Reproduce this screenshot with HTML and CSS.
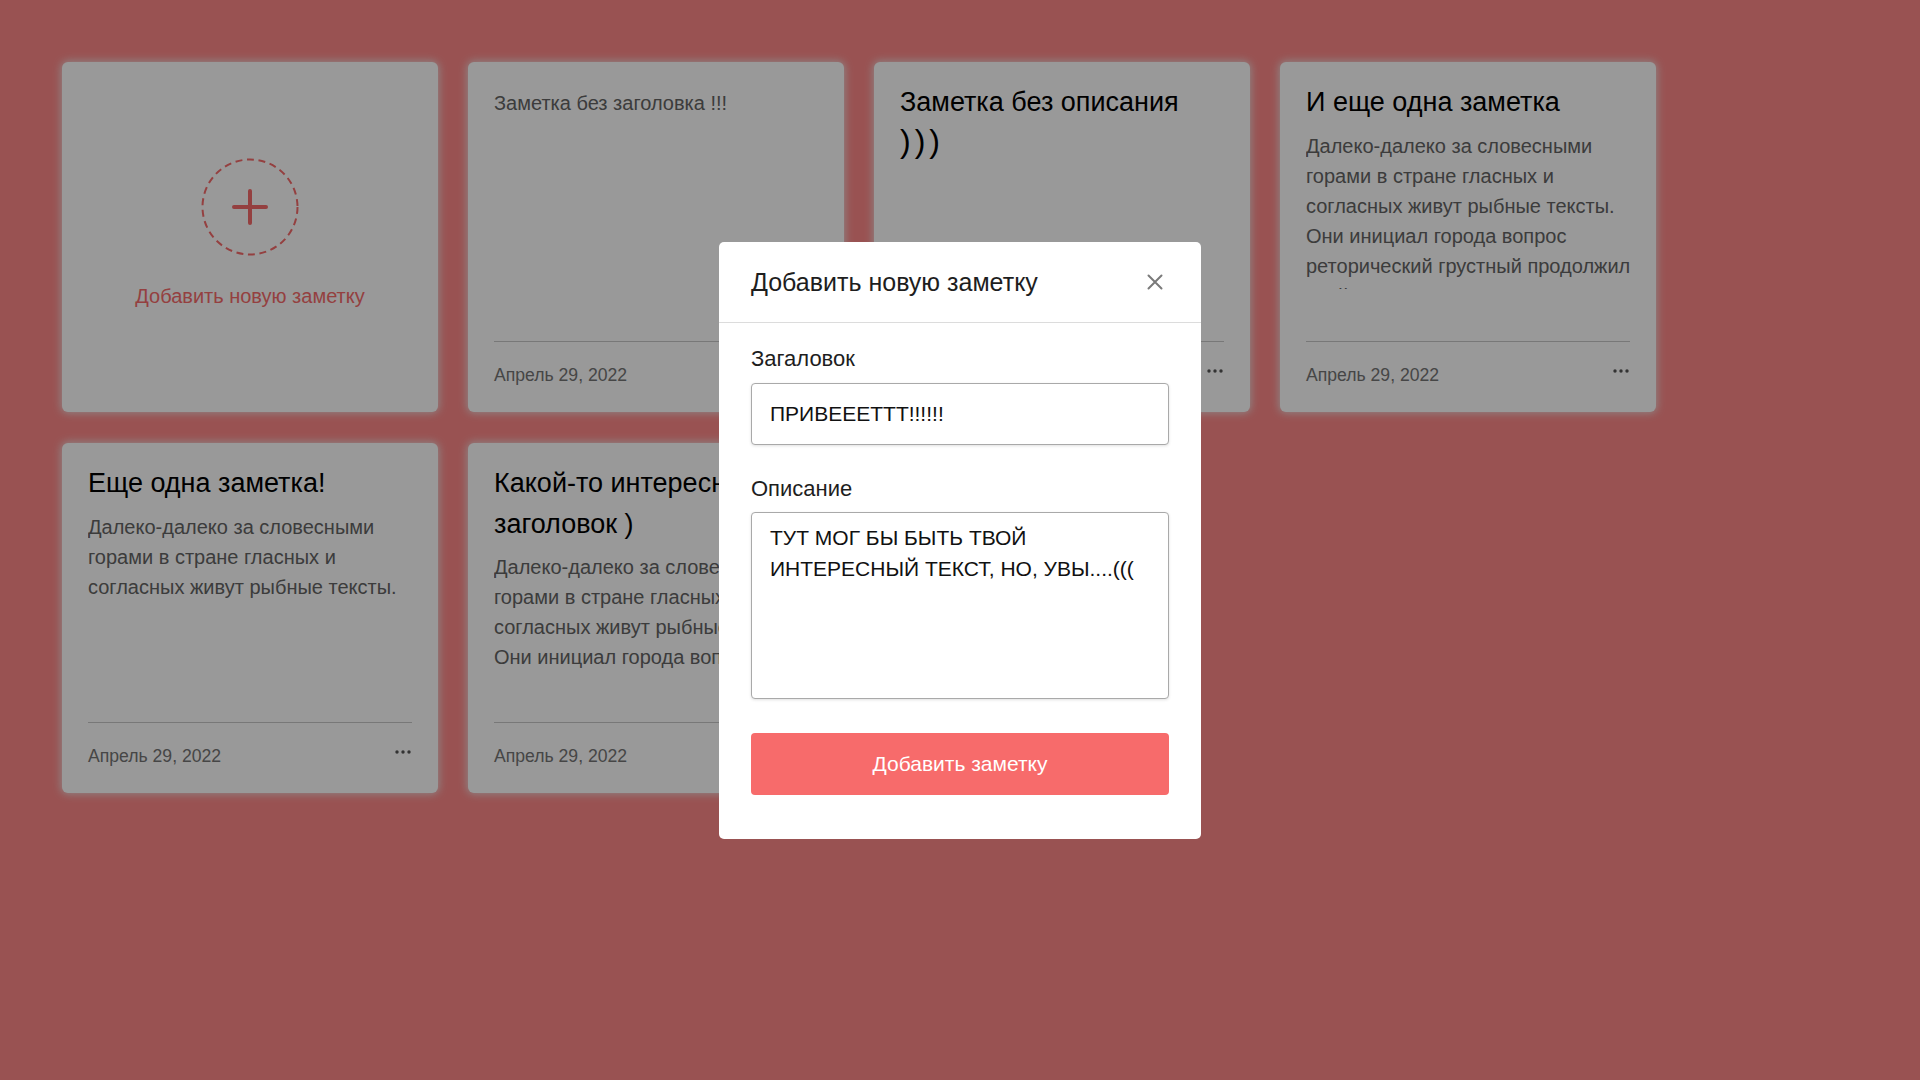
FILE: index.html
```html
<!DOCTYPE html>
<html lang="ru">
<head>
<meta charset="utf-8">
<title>Заметки</title>
<link rel="stylesheet" href="styles.css">
</head>
<body>
<main class="notes">
  <div class="card card-add">
    <svg class="add-icon" width="98" height="98" viewBox="0 0 98 98">
      <circle cx="49" cy="49" r="47.5" fill="none" stroke="#f76b6b" stroke-width="2" stroke-dasharray="7 4.6"/>
      <path d="M49 33v32M33 49h32" stroke="#f76b6b" stroke-width="4" stroke-linecap="round"/>
    </svg>
    <div class="add-label">Добавить новую заметку</div>
  </div>

  <div class="card">
    <div class="card-body">
      <p class="card-desc only">Заметка без заголовка !!!</p>
    </div>
    <div class="card-footer">
      <span class="date">Апрель 29, 2022</span>
      <svg class="dots" width="16" height="4" viewBox="0 0 16 4"><circle cx="2" cy="2" r="1.7"/><circle cx="8" cy="2" r="1.7"/><circle cx="14" cy="2" r="1.7"/></svg>
    </div>
  </div>

  <div class="card">
    <div class="card-body">
      <h2 class="card-title">Заметка без описания <span class="smile">)))</span></h2>
    </div>
    <div class="card-footer">
      <span class="date">Апрель 29, 2022</span>
      <svg class="dots" width="16" height="4" viewBox="0 0 16 4"><circle cx="2" cy="2" r="1.7"/><circle cx="8" cy="2" r="1.7"/><circle cx="14" cy="2" r="1.7"/></svg>
    </div>
  </div>

  <div class="card">
    <div class="card-body">
      <h2 class="card-title">И еще одна заметка</h2>
      <p class="card-desc">Далеко-далеко за словесными горами в стране гласных и согласных живут рыбные тексты. Они инициал города вопрос реторический грустный продолжил свой путь, рот на вопрос.</p>
    </div>
    <div class="card-footer">
      <span class="date">Апрель 29, 2022</span>
      <svg class="dots" width="16" height="4" viewBox="0 0 16 4"><circle cx="2" cy="2" r="1.7"/><circle cx="8" cy="2" r="1.7"/><circle cx="14" cy="2" r="1.7"/></svg>
    </div>
  </div>

  <div class="card">
    <div class="card-body">
      <h2 class="card-title">Еще одна заметка!</h2>
      <p class="card-desc">Далеко-далеко за словесными горами в стране гласных и согласных живут рыбные тексты.</p>
    </div>
    <div class="card-footer">
      <span class="date">Апрель 29, 2022</span>
      <svg class="dots" width="16" height="4" viewBox="0 0 16 4"><circle cx="2" cy="2" r="1.7"/><circle cx="8" cy="2" r="1.7"/><circle cx="14" cy="2" r="1.7"/></svg>
    </div>
  </div>

  <div class="card">
    <div class="card-body">
      <h2 class="card-title">Какой-то интересный заголовок )</h2>
      <p class="card-desc">Далеко-далеко за словесными горами в стране гласных и согласных живут рыбные тексты. Они инициал города вопрос реторический грустный продолжил свой путь.</p>
    </div>
    <div class="card-footer">
      <span class="date">Апрель 29, 2022</span>
      <svg class="dots" width="16" height="4" viewBox="0 0 16 4"><circle cx="2" cy="2" r="1.7"/><circle cx="8" cy="2" r="1.7"/><circle cx="14" cy="2" r="1.7"/></svg>
    </div>
  </div>
</main>

<div class="overlay">
  <div class="modal">
    <div class="modal-header">
      <h3 class="modal-title">Добавить новую заметку</h3>
      <button class="close" type="button" aria-label="Закрыть">
        <svg width="16" height="16" viewBox="0 0 16 16"><path d="M1.5 1.5l13 13M14.5 1.5l-13 13" stroke="#7a7a7a" stroke-width="2" stroke-linecap="round"/></svg>
      </button>
    </div>
    <form class="modal-body">
      <label class="field-label" for="title">Загаловок</label>
      <input class="field-input" id="title" type="text" value="ПРИВЕЕЕТТТ!!!!!!">
      <label class="field-label second" for="desc">Описание</label>
      <textarea class="field-area" id="desc">ТУТ МОГ БЫ БЫТЬ ТВОЙ ИНТЕРЕСНЫЙ ТЕКСТ, НО, УВЫ....(((</textarea>
      <button class="submit" type="button">Добавить заметку</button>
    </form>
  </div>
</div>
</body>
</html>
```

FILE: styles.css
```css
* { box-sizing: border-box; }

html, body {
  margin: 0;
  height: 100%;
}

body {
  background: #ff8989;
  font-family: "Liberation Sans", Arial, sans-serif;
  color: #222;
}

.notes {
  display: grid;
  grid-template-columns: repeat(4, 376px);
  grid-auto-rows: 350px;
  gap: 31px 30px;
  padding: 62px;
}

.card {
  background: #fff;
  border-radius: 6px;
  box-shadow: 0 0 9px 1px rgba(235, 235, 235, 0.9);
  padding: 20px 26px 26px;
  display: flex;
  flex-direction: column;
  height: 350px;
}

.card-add {
  align-items: center;
  justify-content: center;
  padding: 0 0 6px;
}

.add-icon { display: block; }

.add-label {
  margin-top: 25px;
  font-size: 20px;
  line-height: 30px;
  color: #f76b6b;
}

.card-body {
  flex: 1;
  min-height: 0;
  overflow: hidden;
  margin-bottom: 52px;
}

.card-title {
  margin: 0 0 8px;
  font-size: 27px;
  line-height: 1.5;
  font-weight: 400;
  color: #000;
}

.smile {
  font-size: 32px;
  letter-spacing: 4px;
  line-height: 1;
}

.card-desc {
  margin: 0 -6px 0 0;
  font-size: 20px;
  line-height: 30px;
  color: #646464;
}

.card-desc.only { margin-top: 6px; }

.card-footer {
  border-top: 1px solid #c8c8c8;
  padding-top: 23px;
  display: flex;
  justify-content: space-between;
  align-items: flex-start;
}

.date {
  font-size: 17.6px;
  color: #757575;
}

.dots {
  display: block;
  margin-top: 4px;
  margin-right: 1px;
  fill: #555;
}

.overlay {
  position: fixed;
  inset: 0;
  background: rgba(0, 0, 0, 0.4);
  display: flex;
  align-items: center;
  justify-content: center;
}

.modal {
  width: 482px;
  background: #fff;
  border-radius: 5px;
}

.modal-header {
  display: flex;
  align-items: center;
  justify-content: space-between;
  padding: 26px 38px 26px 32px;
  border-bottom: 1px solid #dcdcdc;
}

.modal-title {
  margin: 0;
  font-size: 25px;
  font-weight: 400;
  line-height: 28px;
  color: #1e1e1e;
}

.close {
  border: 0;
  background: none;
  padding: 0;
  width: 16px;
  height: 16px;
  display: flex;
}

.modal-body {
  padding: 23px 32px 44px;
  display: flex;
  flex-direction: column;
}

.field-label {
  font-size: 22px;
  line-height: 25px;
  color: #1e1e1e;
}

.field-label.second { margin-top: 31px; }

.field-input,
.field-area {
  margin-top: 12px;
  width: 100%;
  border: 1px solid #a9a9a9;
  border-radius: 4px;
  font-family: "Liberation Sans", Arial, sans-serif;
  font-size: 21px;
  color: #111;
  background: #fff;
  box-shadow: 0 1px 3px rgba(0, 0, 0, 0.12);
  outline: none;
}

.field-input {
  height: 62px;
  padding: 0 18px;
}

.field-area {
  margin-top: 11px;
  height: 187px;
  padding: 9px 10px 10px 18px;
  line-height: 31.5px;
  resize: none;
  overflow: hidden;
}

.submit {
  margin-top: 34px;
  height: 62px;
  border: 0;
  border-radius: 4px;
  background: #f76b6b;
  color: #fff;
  font-family: "Liberation Sans", Arial, sans-serif;
  font-size: 21px;
}
```
